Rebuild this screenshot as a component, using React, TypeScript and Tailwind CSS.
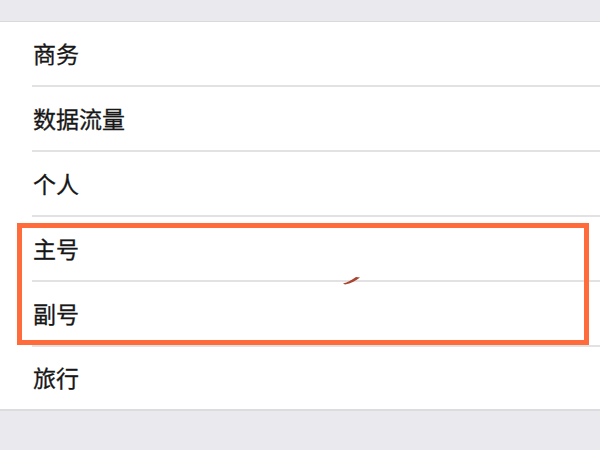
const items = ["商务", "数据流量", "个人", "主号", "副号", "旅行"];

export default function App() {
  return (
    <div
      className="relative w-[600px] h-[450px] overflow-hidden bg-[#eae9ee]"
      style={{ fontFamily: '"Noto Sans CJK SC", "Noto Sans", sans-serif' }}
    >
      {/* top grey band */}
      <div className="h-[22px] border-b border-[#d9d9dd] bg-[#e9e9ee]" />

      {/* list */}
      <div className="bg-white border-b-2 border-[#dcdce0]">
        {items.map((label, i) => (
          <div key={label} className="pl-[32px]">
            <div
              className={`flex items-center text-[23px] leading-none text-[#171717] ${
                i < items.length - 1 ? "h-[65px] border-b-2 border-[#e2e2e2]" : "h-[62px]"
              }`}
            >
              <span className="pl-[1px] -mt-[1px] [-webkit-text-stroke:0.3px_#171717]">{label}</span>
            </div>
          </div>
        ))}
      </div>

      {/* highlight box */}
      <div className="absolute left-[17px] top-[223px] w-[572px] h-[122px] border-[5px] border-[#ff6b3b]" />

      {/* small brush mark */}
      <svg className="absolute left-[340px] top-[275px]" width="22" height="10" viewBox="0 0 22 10">
        <path d="M3 8.5 C8 7.5 11 5 16 2 L20 2.5 C15 6 11 8.5 5 9.5 Z" fill="#a8452f" />
      </svg>
    </div>
  );
}
